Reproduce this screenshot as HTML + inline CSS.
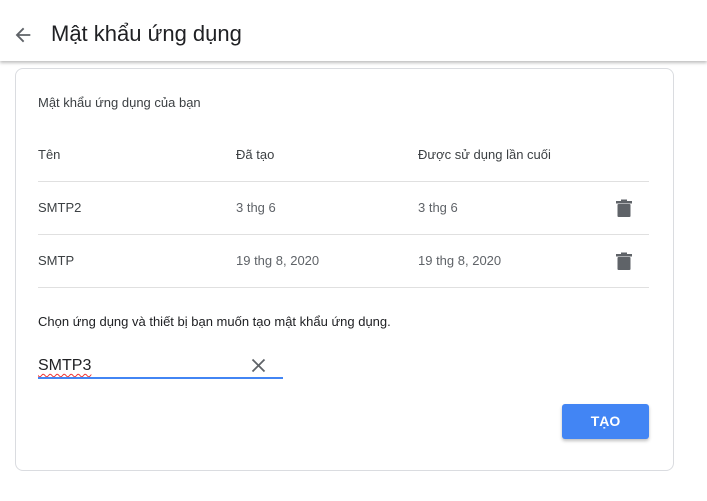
<!DOCTYPE html>
<html><head><meta charset="utf-8"><style>
*{margin:0;padding:0;box-sizing:border-box}
body{width:707px;height:501px;background:#fff;font-family:"Liberation Sans",Arial,sans-serif;position:relative;overflow:hidden;color:#202124}
.bg{position:absolute;left:10px;top:-2px;font-size:13px;color:#f1f1f1;white-space:nowrap}
.hdr{position:absolute;left:0;top:0;width:707px;height:61px;background:#fff;box-shadow:0 2px 3px rgba(0,0,0,.25)}
.ttl{position:absolute;left:51px;top:21px;font-size:22px;color:#202124}
.arrow{position:absolute;left:12px;top:24px}
.card{position:absolute;left:15px;top:68px;width:659px;height:403px;border:1px solid #dadce0;border-radius:8px;background:#fff}
.t{position:absolute;font-size:13px;color:#3c4043}
.g{color:#5f6368}
.line{position:absolute;left:38px;width:611px;height:1px;background:#e0e0e0}
.trash{position:absolute}
.btn{position:absolute;left:562px;top:404px;width:87px;height:35px;background:#4285f4;border-radius:3px;color:#fff;font-weight:bold;font-size:14px;text-align:center;line-height:35px;box-shadow:0 2px 3px rgba(0,0,0,.25)}
</style></head><body>
<div class="bg">trên các ứng dụng hoặc thiết bị không hỗ trợ Xác minh 2 bước. Bạn chỉ cần nhập mật khẩu một lần để bạn không cần phải nhớ</div>
<div class="hdr">
<svg class="arrow" width="22" height="22" viewBox="0 0 24 24"><path d="M20 11H7.83l5.59-5.59L12 4l-8 8 8 8 1.41-1.41L7.83 13H20v-2z" fill="#5f6368"/></svg>
<div class="ttl">Mật khẩu ứng dụng</div>
</div>
<div class="card"></div>
<div class="t" style="left:38px;top:95px">Mật khẩu ứng dụng của bạn</div>
<div class="t" style="left:38px;top:147px">Tên</div>
<div class="t" style="left:236px;top:147px">Đã tạo</div>
<div class="t" style="left:418px;top:147px">Được sử dụng lần cuối</div>
<div class="line" style="top:181px"></div>
<div class="t" style="left:38px;top:200px">SMTP2</div>
<div class="t g" style="left:236px;top:200px">3 thg 6</div>
<div class="t g" style="left:418px;top:200px">3 thg 6</div>
<svg class="trash" style="left:615px;top:198px" width="18" height="20" viewBox="0 0 18 20"><rect x="1" y="3" width="16" height="2.5" fill="#5f6368"/><rect x="6" y="1.5" width="6" height="2" fill="#5f6368"/><rect x="2.5" y="6" width="13" height="13" rx="1" fill="#5f6368"/></svg>
<div class="line" style="top:234px"></div>
<div class="t" style="left:38px;top:253px">SMTP</div>
<div class="t g" style="left:236px;top:253px">19 thg 8, 2020</div>
<div class="t g" style="left:418px;top:253px">19 thg 8, 2020</div>
<svg class="trash" style="left:615px;top:251px" width="18" height="20" viewBox="0 0 18 20"><rect x="1" y="3" width="16" height="2.5" fill="#5f6368"/><rect x="6" y="1.5" width="6" height="2" fill="#5f6368"/><rect x="2.5" y="6" width="13" height="13" rx="1" fill="#5f6368"/></svg>
<div class="line" style="top:287px"></div>
<div class="t" style="left:38px;top:314px;color:#202124">Chọn ứng dụng và thiết bị bạn muốn tạo mật khẩu ứng dụng.</div>
<div class="t" style="left:38px;top:357px;font-size:16px;color:#202124;text-decoration:underline wavy #e33;text-decoration-thickness:1px;text-underline-offset:3px">SMTP3</div>
<svg style="position:absolute;left:251px;top:358px" width="15" height="15" viewBox="0 0 15 15"><path d="M1.5 1.5L13.5 13.5M13.5 1.5L1.5 13.5" stroke="#5f6368" stroke-width="1.8"/></svg>
<div style="position:absolute;left:38px;top:377px;width:245px;height:2px;background:#4285f4"></div>
<div class="btn">TẠO</div>
</body></html>
